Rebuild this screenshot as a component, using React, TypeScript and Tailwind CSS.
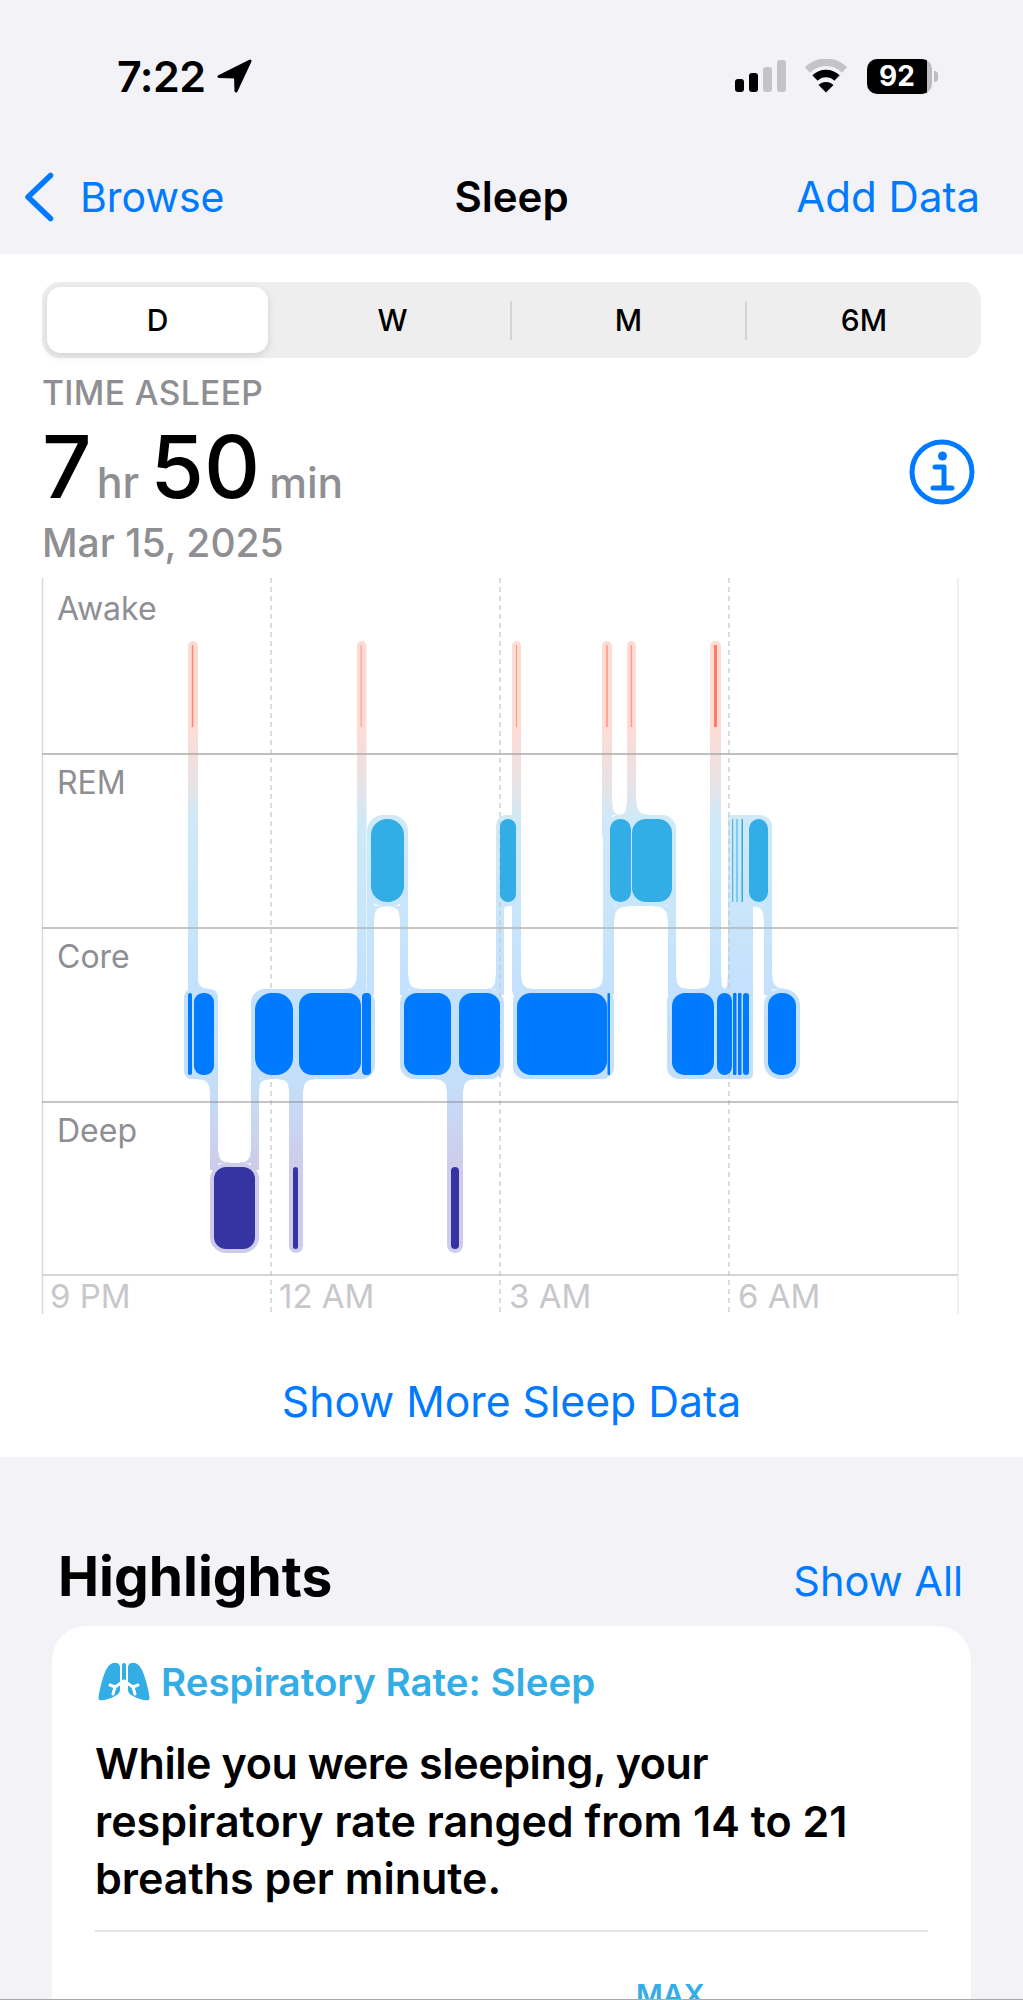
const font = { fontFamily: 'Inter, "Liberation Sans", sans-serif' };

const halos = [
  // awake columns
  [188, 641, 10, 354, 5], [357, 641, 9.5, 354, 5], [512, 641, 9, 354, 5],
  [602, 641, 10, 200, 5], [603, 820, 11, 175, 0], [627, 641, 9, 190, 5], [710, 641, 11, 354, 5],
  // rem
  [367, 815, 41, 91, 16], [496, 815, 25, 91, 10], [606, 815, 70, 91, 14], [728, 815, 44, 91, 12], [728, 815, 17, 91, 0],
  // rem to core legs
  [367, 890, 7, 105, 0], [400, 890, 8, 105, 0], [496, 890, 8, 105, 0], [513, 890, 8, 105, 0],
  [668, 890, 8, 105, 0], [728, 890, 25, 105, 0], [764, 890, 8, 105, 0],
  // core
  [184, 989, 34, 90, 8], [251, 989, 124, 90, 14], [400, 989, 104, 90, 14], [513, 989, 101, 90, 12],
  [667, 989, 86, 90, 12], [740, 989, 13, 90, 5], [764, 989, 36, 90, 16],
  // core to deep legs
  [210, 1070, 8, 100, 0], [251, 1070, 8, 100, 0], [289, 1070, 14, 100, 0], [447, 1070, 16, 100, 0],
  // deep
  [210, 1163, 49, 90, 16], [289, 1163, 14, 90, 7], [447, 1163, 16, 90, 8],
];

// concave corners: x, y, dx, dy, rx, ry
const fillets = [
  [197, 989, 1, -1, 11, 14], [210, 1079, -1, 1, 12, 12], [218, 1163, 1, -1, 12, 12], [251, 1163, -1, -1, 12, 12],
  [259, 1079, 1, 1, 10, 10], [289, 1079, -1, 1, 10, 10], [303, 1079, 1, 1, 12, 12],
  [447, 1079, -1, 1, 12, 12], [463, 1079, 1, 1, 12, 12],
  [357, 989, -1, -1, 11, 14], [408, 989, 1, -1, 11, 14], [374, 906, 1, 1, 12, 12], [400, 906, -1, 1, 12, 12],
  [496, 989, -1, -1, 8, 14], [503.5, 906, 1, 1, 4, 5],
  [521, 989, 1, -1, 11, 12], [603, 989, -1, -1, 11, 12], [614, 906, 1, 1, 14, 14], [668, 906, -1, 1, 14, 14],
  [612, 815, 1, -1, 7.5, 12], [627, 815, -1, -1, 7.5, 12], [636, 815, 1, -1, 12, 14],
  [676, 989, 1, -1, 11, 12], [710, 989, -1, -1, 11, 12], [721, 989, 1, -1, 3.5, 12], [728, 989, -1, -1, 3.5, 12],
  [772, 989, 1, -1, 12, 14], [764, 906, -1, 1, 11, 12],
];

const awake = [
  [191.8, 1.5, '#ff8670'], [360.6, 1, '#ff9684'], [516, 1, '#ff9684'],
  [606, 2, '#ffa797'], [630.6, 1.5, '#ff9c8b'], [714, 3, '#ff7d66'],
];

const rem = [
  [371, 33, 16], [500, 16, 8], [610, 21, 10], [632, 40, 14], [732.2, 1, 0.5], [736.5, 1, 0.5], [741.5, 1.5, 0.5], [749, 19, 10],
];

const core = [
  [188, 4, 2], [194, 20, 9], [255, 38, 17], [299, 62, 13], [362, 9, 4], [404, 47, 13], [459, 41, 13], [517, 90, 14],
  [607.5, 2.5, 1], [672, 42, 13], [717, 15, 8], [733, 3.5, 1], [738, 3.5, 1], [743, 6, 3], [768, 28, 13],
];

const deep = [[214, 41, 12], [293, 5, 2.5], [451, 8, 4]];

const rows = [
  [754, '#ababab', 1.3], [928, '#b5b5b5', 1.5], [1102, '#8c8c8c', 1], [1275, '#c8c8c8', 1.5],
];

function SleepChart() {
  return (
    <svg viewBox="0 578 1023 736" className="block w-[1023px] h-[736px] overflow-visible">
      <defs>
        <linearGradient id="halo" gradientUnits="userSpaceOnUse" x1="0" y1="641" x2="0" y2="1253">
          <stop offset="0.145" stopColor="#fddcd6" />
          <stop offset="0.24" stopColor="#e6e3e7" />
          <stop offset="0.29" stopColor="#cfe9f7" />
          <stop offset="0.43" stopColor="#c9e6fa" />
          <stop offset="0.57" stopColor="#c3e1fd" />
          <stop offset="0.72" stopColor="#c4dff9" />
          <stop offset="0.85" stopColor="#cdcdeb" />
          <stop offset="1" stopColor="#cdcdeb" />
        </linearGradient>
      </defs>
      {halos.map(([x, y, w, h, r], i) => (
        <rect key={i} x={x} y={y} width={w} height={h} rx={r} fill="url(#halo)" />
      ))}
      {fillets.map(([x, y, dx, dy, rx, ry], i) => (
        <path
          key={i}
          d={`M${x} ${y}L${x + dx * rx} ${y}Q${x} ${y} ${x} ${y + dy * ry}Z`}
          fill="url(#halo)"
          stroke="url(#halo)"
          strokeWidth="0.5"
        />
      ))}
      <line x1="42.5" y1="578" x2="42.5" y2="1314" stroke="#dadada" strokeWidth="1.5" />
      <line x1="958" y1="578" x2="958" y2="1314" stroke="#e0e0e0" strokeWidth="1" />
      {[271, 500, 729].map((x) => (
        <line key={x} x1={x} y1="578" x2={x} y2="1314" stroke="#c9c9c9" strokeWidth="1.3" strokeDasharray="5 4" />
      ))}
      {rows.map(([y, color, w]) => (
        <line key={y as number} x1="42" y1={y as number} x2="958" y2={y as number} stroke={color as string} strokeWidth={w as number} />
      ))}
      {awake.map(([x, w, c], i) => (
        <rect key={i} x={x as number} y="645" width={w as number} height="82" fill={c as string} />
      ))}
      {rem.map(([x, w, r], i) => (
        <rect key={i} x={x} y="819" width={w} height="83" rx={r} fill="#32ade6" />
      ))}
      {core.map(([x, w, r], i) => (
        <rect key={i} x={x} y="993" width={w} height="82" rx={r} fill="#007aff" />
      ))}
      {deep.map(([x, w, r], i) => (
        <rect key={i} x={x} y="1167" width={w} height="82" rx={r} fill="#3634a3" />
      ))}
      <g style={font} fontSize="32" fontWeight="400" fill="#8e8e93">
        <text x="57" y="620">Awake</text>
        <text x="57" y="794">REM</text>
        <text x="57" y="968">Core</text>
        <text x="57" y="1142">Deep</text>
      </g>
      <g style={font} fontSize="33" fontWeight="400" fill="#c7c7cc">
        <text x="50" y="1308">9 PM</text>
        <text x="279" y="1308">12 AM</text>
        <text x="509" y="1308">3 AM</text>
        <text x="738" y="1308">6 AM</text>
      </g>
    </svg>
  );
}

function LungsIcon() {
  return (
    <svg viewBox="0 0 52 38" className="w-[52px] h-[38px] ml-[3px]">
      <path d="M15 0C9 2 6 10 3 22C1 30 0 35 1 37C5 38 12 36 17 33C21 31 22 29 22 26L22 4C22 1 19 -1 15 0Z" fill="#32ade6" />
      <path d="M37 0C43 2 46 10 49 22C51 30 52 35 51 37C47 38 40 36 35 33C31 31 30 29 30 26L30 4C30 1 33 -1 37 0Z" fill="#32ade6" />
      <rect x="24" y="0" width="4" height="20" rx="2" fill="#32ade6" />
      <path d="M26 18L17 24L12 22M17 24L15 31M26 18L35 24L40 22M35 24L37 31" stroke="#fff" strokeWidth="3" strokeLinecap="round" fill="none" />
    </svg>
  );
}

function StatusIcons() {
  return (
    <div className="flex items-center">
      <svg viewBox="0 0 51 32" className="w-[51px] h-[32px]">
        <rect x="0" y="19" width="9" height="13" rx="3" fill="#000" />
        <rect x="14" y="13" width="9" height="19" rx="3" fill="#000" />
        <rect x="28" y="7" width="9" height="25" rx="3" fill="#c4c4c8" />
        <rect x="42" y="0" width="9" height="32" rx="3" fill="#c4c4c8" />
      </svg>
      <svg viewBox="0 0 44 34" className="w-[44px] h-[34px] ml-[18px]">
        <path d="M3.5 11A26 26 0 0 1 40.5 11" stroke="#c4c4c8" strokeWidth="7.5" fill="none" />
        <path d="M11 19A15.5 15.5 0 0 1 33 19" stroke="#000" strokeWidth="7.5" fill="none" />
        <path d="M22 33.5L14.5 26A10.6 10.6 0 0 1 29.5 26Z" fill="#000" />
      </svg>
      <div className="flex items-center ml-[19px]">
        <div className="flex w-[65px] h-[35px] rounded-[10px] overflow-hidden">
          <div className="w-[60px] bg-black text-white text-[28px] font-bold leading-[35px] text-center">92</div>
          <div className="w-[5px] bg-[#bdbdc1]" />
        </div>
        <div className="w-[4px] h-[11px] ml-[2px] rounded-r-[4px] bg-[#bdbdc1]" />
      </div>
    </div>
  );
}

export default function App() {
  return (
    <div style={font} className="relative w-[1023px] h-[2000px] overflow-hidden bg-[#f2f2f7] text-black">
      <header className="h-[254px] bg-[#f2f2f7]">
        <div className="flex items-center justify-between h-[36px] pt-[58px] box-content pl-[117px] pr-[85px]">
          <div className="flex items-center">
            <span className="text-[43px] font-semibold leading-[36px] tracking-[-0.5px]">7:22</span>
            <svg viewBox="0 0 35 34" className="w-[35px] h-[34px] ml-[11px]">
              <path d="M33 2L2 17.5L18.5 18L19 32Z" fill="#000" stroke="#000" strokeWidth="3" strokeLinejoin="round" />
            </svg>
          </div>
          <StatusIcons />
        </div>
        <div className="grid grid-cols-[1fr_auto_1fr] items-center mt-[73px] h-[60px]">
          <div className="flex items-center pl-[24px] text-[#007aff]">
            <svg viewBox="0 0 30 50" className="w-[30px] h-[50px]">
              <path d="M26.5 3.5L4 25L26.5 46.5" stroke="#007aff" strokeWidth="5.5" strokeLinecap="round" strokeLinejoin="round" fill="none" />
            </svg>
            <span className="text-[41px] ml-[26px] leading-[60px]">Browse</span>
          </div>
          <div className="text-[42px] font-semibold leading-[60px]">Sleep</div>
          <div className="text-right pr-[43px] text-[42px] text-[#007aff] leading-[60px]">Add Data</div>
        </div>
      </header>

      <main className="h-[1203px] bg-white">
        <div className="pt-[28px] pl-[42px]">
          <div className="flex items-center w-[939px] h-[76px] rounded-[18px] bg-[#eeeeef] text-[30px] font-medium">
            <div className="w-[233px]">
              <div className="ml-[5px] w-[221px] h-[66px] rounded-[14px] bg-white shadow-[0_3px_8px_rgba(0,0,0,0.12)] flex items-center justify-center">D</div>
            </div>
            <div className="w-[235px] text-center">W</div>
            <div className="w-[235px] h-[39px] leading-[39px] text-center border-l-[2px] border-[#d4d4d6]">M</div>
            <div className="w-[236px] h-[39px] leading-[39px] text-center border-l-[2px] border-[#d4d4d6]">6M</div>
          </div>
          <div className="mt-[16px] text-[33.5px] font-medium leading-[38px] tracking-[0.4px] text-[#8e8e93]">TIME ASLEEP</div>
          <div className="flex items-center justify-between pr-[42px] h-[84px] mt-[16px]">
            <div className="flex items-baseline">
              <span className="text-[87px] font-medium leading-[84px]">7</span>
              <span className="text-[43px] font-medium text-[#8e8e93] ml-[5px]">hr</span>
              <span className="text-[87px] font-medium leading-[84px] ml-[11px]">50</span>
              <span className="text-[42.5px] font-medium text-[#8e8e93] ml-[9px]">min</span>
            </div>
            <svg viewBox="0 0 66 66" className="w-[66px] h-[66px] mr-[6px] mt-[4px]">
              <circle cx="33" cy="33" r="30" fill="none" stroke="#007aff" strokeWidth="5" />
              <circle cx="33.5" cy="17" r="4.5" fill="#007aff" />
              <path d="M26 28H35V49M24 49H43" fill="none" stroke="#007aff" strokeWidth="5" strokeLinecap="round" strokeLinejoin="round" />
            </svg>
          </div>
          <div className="mt-[8px] text-[39px] font-medium leading-[46px] text-[#8e8e93]">Mar 15, 2025</div>
        </div>
        <div className="mt-[12px]">
          <SleepChart />
        </div>
        <div className="mt-[58px] text-center text-[42.7px] leading-[60px] text-[#007aff]">Show More Sleep Data</div>
      </main>

      <section className="px-[52px]">
        <div className="flex items-baseline justify-between pt-[88px] pl-[6px] pr-[8px] h-[169px] box-border">
          <h2 className="text-[55px] font-bold leading-[62px]">Highlights</h2>
          <span className="text-[41.5px] leading-[62px] text-[#007aff]">Show All</span>
        </div>
        <div className="h-[500px] rounded-[34px] bg-white pt-[34px] px-[43px]">
          <div className="flex items-center text-[38.5px] font-semibold leading-[44px] text-[#32ade6]">
            <LungsIcon />
            <span className="ml-[11px]">Respiratory Rate: Sleep</span>
          </div>
          <p className="mt-[31px] text-[43px] font-semibold leading-[57.5px]">
            <span className="tracking-[-0.4px]">While you were sleeping, your</span>
            <br />
            respiratory rate ranged from 14 to 21
            <br />
            breaths per minute.
          </p>
          <div className="mt-[22px] h-[2px] bg-[#e5e5ea]" />
          <div className="mt-[46px] ml-[541px] text-[29px] font-semibold leading-[34px] text-[#32ade6]">MAX</div>
        </div>
      </section>
      <div className="absolute left-0 bottom-0 w-full h-px bg-[#a8a8a8]" />
    </div>
  );
}
